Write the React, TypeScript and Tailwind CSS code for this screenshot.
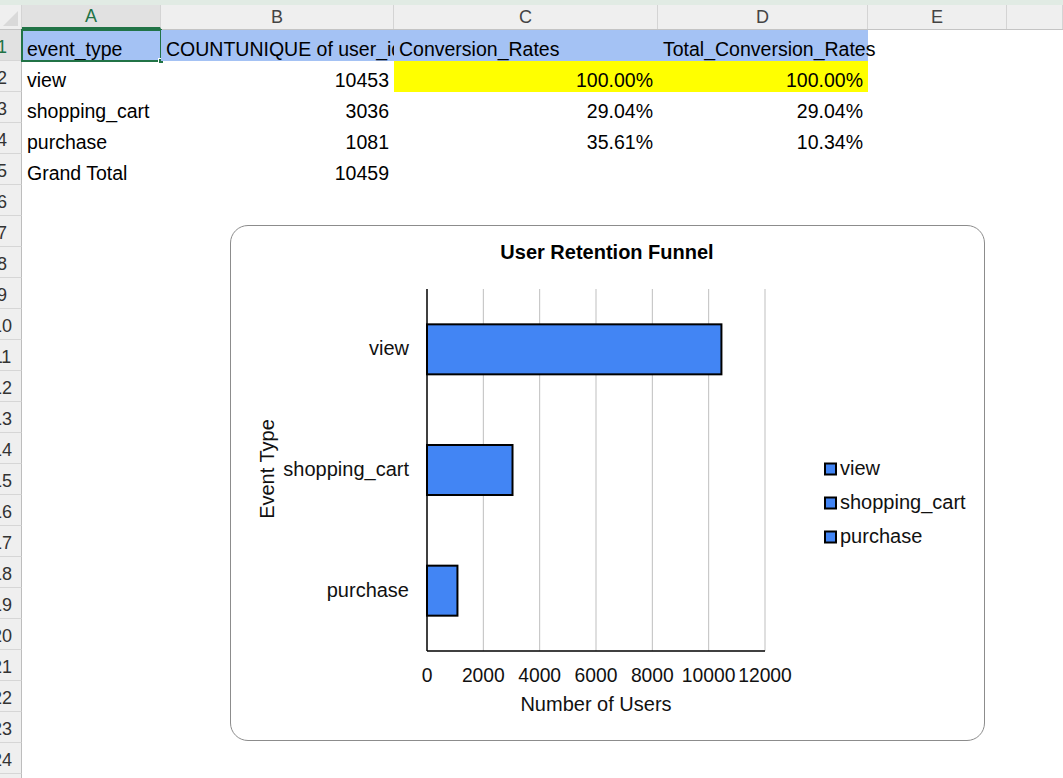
import React from 'react'

const cols = [
  { key: 'A', w: 139 },
  { key: 'B', w: 233 },
  { key: 'C', w: 264 },
  { key: 'D', w: 210 },
  { key: 'E', w: 139 },
  { key: '', w: 56 },
]

type Cell = { text?: string; right?: boolean; bg?: string; clip?: boolean }

const data: Record<number, Cell[]> = {
  1: [
    { text: 'event_type', bg: 'bg-[#a4c2f4]' },
    { text: 'COUNTUNIQUE of user_id', bg: 'bg-[#a4c2f4]', clip: true },
    { text: 'Conversion_Rates', bg: 'bg-[#a4c2f4]' },
    { text: 'Total_Conversion_Rates', bg: 'bg-[#a4c2f4]' },
  ],
  2: [
    { text: 'view' },
    { text: '10453', right: true },
    { text: '100.00%', right: true, bg: 'bg-[#ffff00]' },
    { text: '100.00%', right: true, bg: 'bg-[#ffff00]' },
  ],
  3: [{ text: 'shopping_cart' }, { text: '3036', right: true }, { text: '29.04%', right: true }, { text: '29.04%', right: true }],
  4: [{ text: 'purchase' }, { text: '1081', right: true }, { text: '35.61%', right: true }, { text: '10.34%', right: true }],
  5: [{ text: 'Grand Total' }, { text: '10459', right: true }],
}

const rows = Array.from({ length: 25 }, (_, i) => i + 1)

const bars = [
  { name: 'view', value: 10453 },
  { name: 'shopping_cart', value: 3036 },
  { name: 'purchase', value: 1081 },
]

function Chart() {
  const left = 196
  const right = 534
  const top = 63
  const bottom = 425
  const scale = (right - left) / 12000
  const band = (bottom - top) / 3
  const ticks = [0, 2000, 4000, 6000, 8000, 10000, 12000]

  return (
    <svg width="755" height="515" className="block" fontFamily="'Liberation Sans', Arial, sans-serif" fontSize="20">
      <text x="376" y="33" textAnchor="middle" fontWeight="bold" fontSize="20" fill="#000">
        User Retention Funnel
      </text>
      {ticks.slice(1).map((t) => (
        <line key={t} x1={left + t * scale} x2={left + t * scale} y1={top} y2={bottom} stroke="#bfbfbf" strokeWidth="1" />
      ))}
      {bars.map((b, i) => {
        const cy = top + band * i + band / 2
        return (
          <g key={b.name}>
            <rect x={left} y={cy - 25} width={b.value * scale} height="50" fill="#4285f4" stroke="#000" strokeWidth="2" />
            <text x="178" y={cy + 6} textAnchor="end" fill="#111">
              {b.name}
            </text>
          </g>
        )
      })}
      <line x1={left} x2={left} y1={top} y2={bottom} stroke="#000" strokeWidth="1.5" />
      <line x1={left} x2={right} y1={bottom} y2={bottom} stroke="#000" strokeWidth="1.5" />
      {ticks.map((t) => (
        <text key={t} x={left + t * scale} y="456" textAnchor="middle" fontSize="19.3" fill="#111">
          {t}
        </text>
      ))}
      <text x="365" y="485" textAnchor="middle" fill="#111">
        Number of Users
      </text>
      <text x="36" y="243" textAnchor="middle" fill="#111" transform="rotate(-90 36 243)" dy="7">
        Event Type
      </text>
      {bars.map((b, i) => {
        const cy = 243 + i * 34
        return (
          <g key={b.name}>
            <rect x="594" y={cy - 5.5} width="11" height="11" fill="#4285f4" stroke="#000" strokeWidth="2" />
            <text x="609" y={cy + 6} fill="#111">
              {b.name}
            </text>
          </g>
        )
      })}
    </svg>
  )
}

export default function App() {
  return (
    <div className="relative w-[1063px] h-[778px] overflow-hidden bg-white font-['Liberation_Sans',Arial,sans-serif] text-[19.5px] text-black">
      <div className="h-[5px] bg-[#e1ebe4]" />
      {/* column headers */}
      <div className="flex h-[25px] bg-[#efefef] border-b border-[#c4c4c4]">
        <div className="relative w-[22px] shrink-0 border-r border-[#d4d4d4]">
          <div className="absolute right-[3px] bottom-[3px] w-0 h-0 border-l-[15px] border-l-transparent border-b-[15px] border-b-[#d9d9d9]" />
        </div>
        {cols.map((c, i) => (
          <div
            key={i}
            style={{ width: c.w }}
            className={
              c.key === 'A'
                ? 'shrink-0 flex items-center justify-center border-r border-[#d4d4d4] bg-[#e1e1e1] text-[#217346] text-[18px] border-b-2 border-b-[#217346]'
                : 'shrink-0 flex items-center justify-center border-r border-[#d4d4d4] text-[#444] text-[18px]'
            }
          >
            {c.key}
          </div>
        ))}
      </div>
      {rows.map((r) => (
        <div key={r} className="flex h-[31px]">
          <div
            className={
              r === 1
                ? 'w-[22px] shrink-0 overflow-hidden bg-[#e1e1e1] border-r border-[#bdbdbd] border-b border-b-[#d6d6d6] text-[#217346]'
                : 'w-[22px] shrink-0 overflow-hidden bg-[#efefef] border-r border-[#bdbdbd] border-b border-b-[#d6d6d6] text-[#333]'
            }
          >
            <div className="w-[44px] ml-[-20px] h-full flex items-center justify-center pt-[3px] text-[18px] leading-none">{r}</div>
          </div>
          {cols.map((c, ci) => {
            const cell = data[r]?.[ci]
            return (
              <div
                key={ci}
                style={{ width: c.w }}
                className={`relative shrink-0 flex items-end px-[5px] whitespace-nowrap ${cell?.bg ?? ''} ${
                  cell?.right ? 'justify-end' : 'justify-start'
                } ${cell?.clip ? 'overflow-hidden' : ''}`}
              >
                {cell?.text && <span className="leading-[24px]">{cell.text}</span>}
                {r === 1 && ci === 0 && (
                  <div className="absolute inset-[-1px] border-2 border-[#217346]">
                    <div className="absolute right-[-4px] bottom-[-4px] w-[6px] h-[6px] bg-[#217346] border border-white" />
                  </div>
                )}
              </div>
            )
          })}
        </div>
      ))}
      {/* chart floats over the sheet */}
      <div className="absolute left-[230px] top-[225px] w-[755px] h-[516px] rounded-[18px] border border-[#8c8c8c] bg-white overflow-hidden">
        <Chart />
      </div>
    </div>
  )
}
